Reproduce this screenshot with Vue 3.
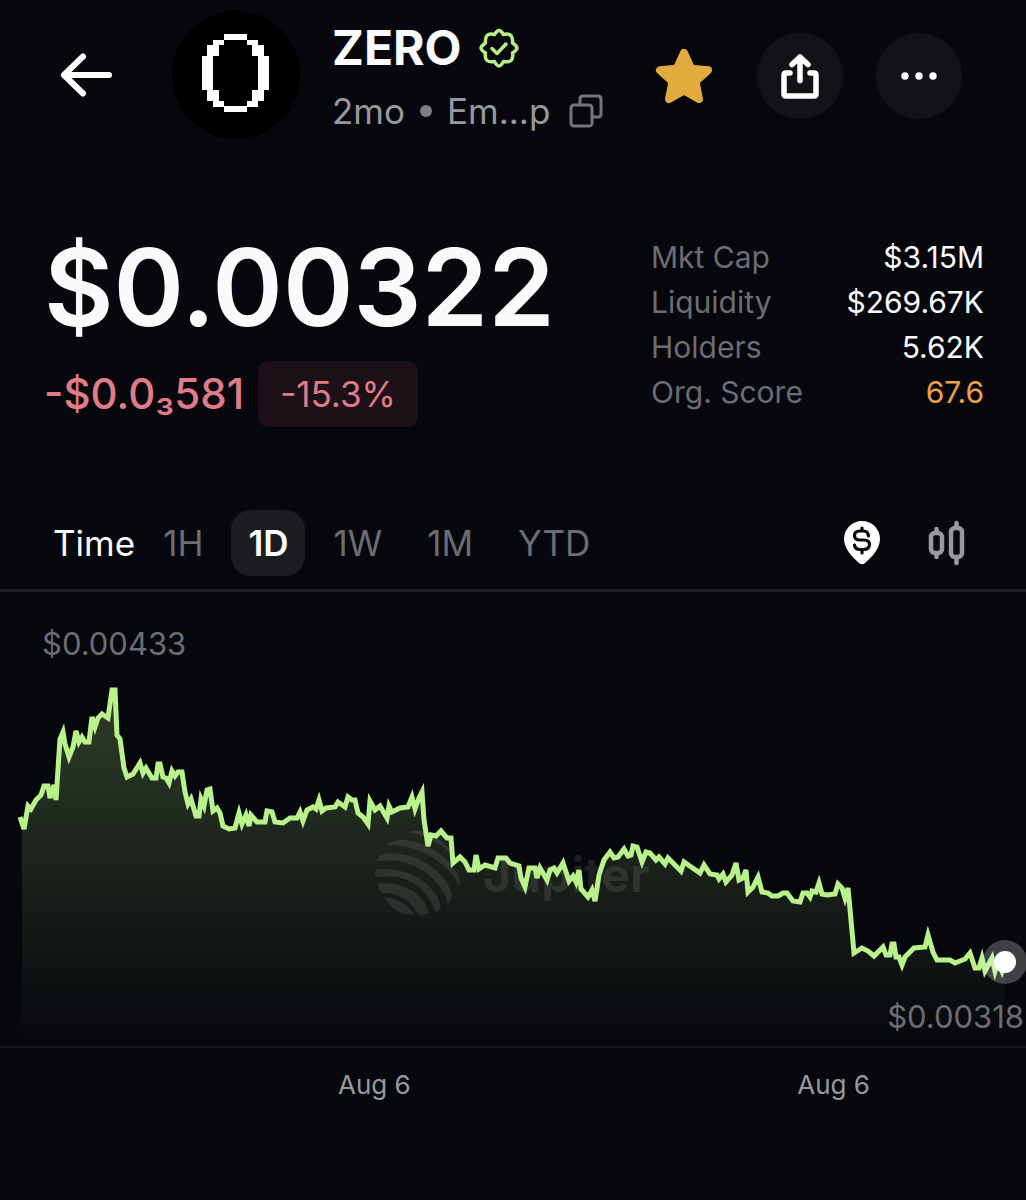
<script setup>
import { ref } from 'vue'

const ranges = ['1H', '1D', '1W', '1M', 'YTD']
const active = ref('1D')

const stats = [
  { label: 'Mkt Cap', value: '$3.15M' },
  { label: 'Liquidity', value: '$269.67K' },
  { label: 'Holders', value: '5.62K' },
  { label: 'Org. Score', value: '67.6', accent: true },
]

const line = `20,817 24,829 28,806 31,809 36,800 41,795 44,786 48,786 50,798 54,785 56,800 60,739 63,732 65,744 69,757 73,747
76,731 79,742 82,737 85,742 89,742 92,717 95,727 98,718 102,714 108,718 112,690 115,690 117,735 120,739 124,768 127,777
133,774 140,763 143,773 146,768 152,778 156,778 158,764 160,764 163,777 166,778 169,783 172,771 175,776 178,772 182,772
185,792 188,804 191,799 196,816 199,816 201,799 204,806 207,790 210,789 213,811 217,808 220,813 223,826 229,829 235,828
239,813 242,824 246,815 249,826 251,815 257,822 265,822 267,811 272,812 275,822 283,823 290,818 297,818 300,812 303,821
307,810 313,807 316,809 319,800 322,811 326,808 335,807 338,802 345,807 348,797 352,800 355,800 358,813 363,817 368,824
370,801 375,810 380,806 387,818 389,806 392,812 400,808 408,807 412,797 415,809 419,798 422,792 424,820 428,846 431,835
436,836 441,831 447,838 451,838 453,863 460,857 465,862 469,870 474,870 476,855 479,869 485,865 495,868 498,858 506,858
510,863 519,866 521,878 525,887 529,868 535,868 537,878 540,868 547,880 550,870 554,868 557,873 563,863 569,881 573,876
576,882 579,870 581,889 588,897 592,890 595,901 599,875 604,860 610,852 614,858 618,857 624,849 628,856 631,855 633,846
637,847 642,862 646,852 650,853 656,860 659,857 665,864 668,858 681,871 684,862 700,873 704,865 710,874 717,875 719,879
723,874 726,882 732,875 736,863 739,880 743,878 746,870 748,892 753,887 758,877 762,892 768,893 772,896 778,896 783,893
787,893 793,901 800,902 803,893 807,893 810,897 812,891 816,892 819,883 822,894 827,895 835,894 838,884 842,888 845,898
848,888 851,920 854,953 862,948 868,951 874,956 883,947 886,955 890,955 892,944 894,944 896,957 899,957 902,965 905,957
914,948 925,947 928,935 933,952 937,960 950,960 955,963 965,959 970,953 975,968 979,968 982,958 985,971 992,958 995,971
998,961 1002,971 1005,962`
</script>

<template>
  <main class="page">
    <header class="header">
      <button class="plain back" aria-label="Back">
        <svg width="54" height="46" viewBox="0 0 54 46" fill="none" stroke="#fff" stroke-width="6" stroke-linecap="round" stroke-linejoin="round">
          <path d="M50 23H5M24 4.500L5 23l19 18.500" />
        </svg>
      </button>
      <svg class="avatar" viewBox="0 0 128 128" aria-hidden="true">
        <circle cx="64" cy="64" r="64" fill="#000" />
        <path fill="#fff" fill-rule="evenodd" d="M52 23h23v6h11v5h6v11h5v34h-5v11h-6v6h-11v5H52v-5H41v-6h-6V79h-5V45h5V34h6v-5h11zM52 29v5h-5v11h-6v34h6v11h5v5h23v-5h5V79h6V45h-6V34h-5v-5z" />
      </svg>
      <div class="identity">
        <div class="name-row">
          <h1>ZERO</h1>
          <svg width="42" height="42" viewBox="0 0 42 42" fill="none" stroke="#b5ee86" stroke-width="3.500" stroke-linejoin="round" stroke-linecap="round">
            <path d="M21 3.500 Q23 3.500 25.500 7.500 Q30 6 33 8.500 Q35 11 34.500 16 Q39 19 39 21 Q39 23 34.500 26 Q35.500 31 33 33.500 Q30.500 35.500 25.500 34.500 Q23 39 21 39 Q19 39 16.500 34.500 Q11.500 35.500 9 33.500 Q6.500 31 7.500 26 Q3 23 3 21 Q3 19 7.500 16 Q7 11 9 8.500 Q11.500 6 16.500 7.500 Q19 3.500 21 3.500Z" />
            <path d="M14 21.500l5 5 9-9.500" />
          </svg>
        </div>
        <div class="meta-row">
          <span>2mo</span><i class="dot"></i><span class="address">Em...p</span>
          <button class="plain" aria-label="Copy address">
            <svg width="34" height="34" viewBox="0 0 34 34" fill="none" stroke="#74757a" stroke-width="3" stroke-linejoin="round">
              <path d="M11 11V5q0-3 3-3h15q3 0 3 3v15q0 3-3 3h-6" />
              <rect x="2" y="11" width="21" height="21" rx="3" />
            </svg>
          </button>
        </div>
      </div>
      <div class="actions">
        <button class="plain" aria-label="Favorite">
          <svg width="58" height="58" viewBox="0 0 58 58" fill="#e1ac3d" stroke="#e1ac3d" stroke-width="8" stroke-linejoin="round">
            <path d="M29 6l7.200 15.700L53 23.200 40.500 34.500 44 52 29 43.500 14 52l3.500-17.500L5 23.200l16.800-1.500z" />
          </svg>
        </button>
        <button class="round" aria-label="Share">
          <svg width="40" height="48" viewBox="0 0 40 48" fill="none" stroke="#fff" stroke-width="5.500" stroke-linecap="round" stroke-linejoin="round">
            <path d="M10 21H6q-2 0-2 2v19q0 2 2 2h28q2 0 2-2V23q0-2-2-2h-4M20 28.500V5M12 12.500L20 5l8 7.500" />
          </svg>
        </button>
        <button class="round" aria-label="More">
          <svg width="36" height="8" viewBox="0 0 36 8" fill="#fff">
            <circle cx="4" cy="4" r="3.700" /><circle cx="18" cy="4" r="3.700" /><circle cx="32" cy="4" r="3.700" />
          </svg>
        </button>
      </div>
    </header>

    <section class="summary">
      <div>
        <div class="price">$0.00322</div>
        <div class="change">
          <span class="delta">-$0.0₃581</span>
          <span class="pill">-15.3%</span>
        </div>
      </div>
      <dl class="stats">
        <div v-for="s in stats" :key="s.label" class="stat">
          <dt>{{ s.label }}</dt>
          <dd :class="{ accent: s.accent }">{{ s.value }}</dd>
        </div>
      </dl>
    </section>

    <nav class="toolbar">
      <span class="time">Time</span>
      <button v-for="r in ranges" :key="r" class="range" :class="{ active: r === active }" @click="active = r">{{ r }}</button>
      <div class="tools">
        <button class="plain" aria-label="Price markers">
          <svg width="38" height="44" viewBox="0 0 38 44">
            <path fill="#fff" d="M19 0C9 0 1 8 1 18c0 9 8 18 15 24q3 2.500 6 0c7-6 15-15 15-24C37 8 29 0 19 0z" />
            <path d="M25.500 15q-.5-5-5-5h-3.500q-5.500 0-5.500 4.500t5.500 4.500h4q5.500 0 5.500 4.500t-5.500 5h-4q-5 0-5.500-4.500M19 7v3M19 29v3" fill="none" stroke="#08090e" stroke-width="3.200" stroke-linecap="round" />
          </svg>
        </button>
        <button class="plain" aria-label="Candlestick chart">
          <svg width="38" height="46" viewBox="0 0 38 46" fill="none" stroke="#98999e" stroke-width="4.500" stroke-linecap="round">
            <rect x="3" y="13" width="11" height="20" rx="4" /><path d="M8.500 9v3M8.500 34v3" />
            <rect x="23" y="8" width="11" height="29" rx="4" /><path d="M28.500 3v4M28.500 38v5" />
          </svg>
        </button>
      </div>
    </nav>

    <section class="chart">
      <svg class="plot" viewBox="0 592 1026 454" role="img" aria-label="Price chart">
        <defs>
          <linearGradient id="area" gradientUnits="userSpaceOnUse" x1="0" y1="689" x2="0" y2="1040">
            <stop offset="0" stop-color="#b5ee86" stop-opacity="0.230" />
            <stop offset="1" stop-color="#b5ee86" stop-opacity="0" />
          </linearGradient>
        </defs>
        <polygon :points="`22,1046 22,817 ${line} 1005,1046`" fill="url(#area)" />
        <svg x="368" y="824" width="100" height="100" viewBox="0 0 300 300" fill="#fff" fill-opacity="0.090">
          <path d="M120 25Q140 18 160 20C205 33 245 65 262 105Q205 38 120 25z" />
          <path d="M55 63Q75 48 100 48C180 50 260 110 276 170V187C240 115 150 58 55 63z" />
          <path d="M25 112Q30 98 42 90C140 75 240 145 252 215Q250 232 240 240C215 150 120 95 25 112z" />
          <path d="M22 160Q20 148 23 138C110 122 205 180 218 245Q218 260 203 264C175 185 110 145 22 160z" />
          <path d="M29 179C100 172 165 205 183 265Q170 276 153 274C130 230 90 205 39 206Q31 196 29 179z" />
          <path d="M49 220C85 222 120 242 139 271Q80 275 49 220z" />
        </svg>
        <text x="483" y="892" class="watermark">Jupiter</text>
        <polyline :points="line" fill="none" stroke="#b9f18a" stroke-width="5" />
        <circle cx="1005" cy="962" r="22" fill="#fff" fill-opacity="0.230" />
        <circle cx="1005" cy="962" r="11" fill="#fff" />
      </svg>
      <span class="high">$0.00433</span>
      <span class="low">$0.00318</span>
    </section>
    <footer class="axis"><span>Aug 6</span><span>Aug 6</span></footer>
  </main>
</template>

<style>
body { margin: 0; background: #07080d; }
</style>

<style scoped>
.page { font-family: Inter, "Liberation Sans", sans-serif; color: #fafafb; background: #07080d; overflow: hidden; }
svg { display: block; flex: none; }
button { font: inherit; color: inherit; border: 0; cursor: pointer; }
.plain { padding: 0; background: none; }
.header { display: flex; align-items: center; padding: 11px 64px 0 59px; }
.avatar { width: 128px; height: 128px; margin: 0 32px 0 59px; }
.identity { display: flex; flex-direction: column; gap: 5px; padding-top: 6px; }
.name-row { display: flex; align-items: center; gap: 16px; }
h1 { margin: 0; font-size: 48px; line-height: 60px; font-weight: 700; }
.meta-row { display: flex; align-items: center; font-size: 35px; line-height: 56px; color: #98999e; }
.dot { width: 12px; height: 12px; border-radius: 50%; background: #7d7e83; margin: 0 15px; }
.address { margin-right: 19px; }
.actions { display: flex; align-items: center; gap: 33px; margin-left: auto; padding-top: 2px; }
.actions .plain { margin-right: 11px; }
.round { width: 86px; height: 86px; padding: 0; border-radius: 50%; background: #121317; display: flex; align-items: center; justify-content: center; }
.summary { display: flex; justify-content: space-between; align-items: flex-start; padding: 96px 42px 0 44px; }
.price { font-size: 107px; line-height: 104px; font-weight: 600; }
.change { display: flex; align-items: center; gap: 14px; margin-top: 22px; color: #e27b88; }
.delta { font-size: 42px; line-height: 66px; font-weight: 500; }
.pill { font-size: 35px; line-height: 66px; padding: 0 22px; border-radius: 10px; background: #1d1118; }
.stats { margin: 0; width: 333px; font-size: 30px; line-height: 45px; }
.stat { display: flex; justify-content: space-between; }
dt { color: #6c6d72; }
dd { margin: 0; }
.accent { color: #eda04a; }
.toolbar { display: flex; align-items: center; gap: 11px; padding: 83px 60px 13px 53px; font-size: 35px; border-bottom: 3px solid #1b1c20; }
.range { height: 66px; padding: 0 17px; border-radius: 20px; background: none; color: #6c6d72; }
.range.active { background: #1c1d21; color: #fff; font-weight: 600; }
.tools { display: flex; align-items: center; gap: 47px; margin-left: auto; }
.chart { position: relative; border-bottom: 2px solid #15161a; color: #6c6d72; font-size: 31px; line-height: 40px; }
.plot { width: 100%; }
.watermark { font-size: 48px; font-weight: 700; fill: #fff; fill-opacity: 0.09; }
.high { position: absolute; left: 42px; top: 32px; }
.low { position: absolute; right: 2px; bottom: 9px; }
.axis { display: flex; justify-content: space-between; padding: 20px 156px 80px 338px; font-size: 26px; line-height: 34px; color: #98999e; }
</style>
